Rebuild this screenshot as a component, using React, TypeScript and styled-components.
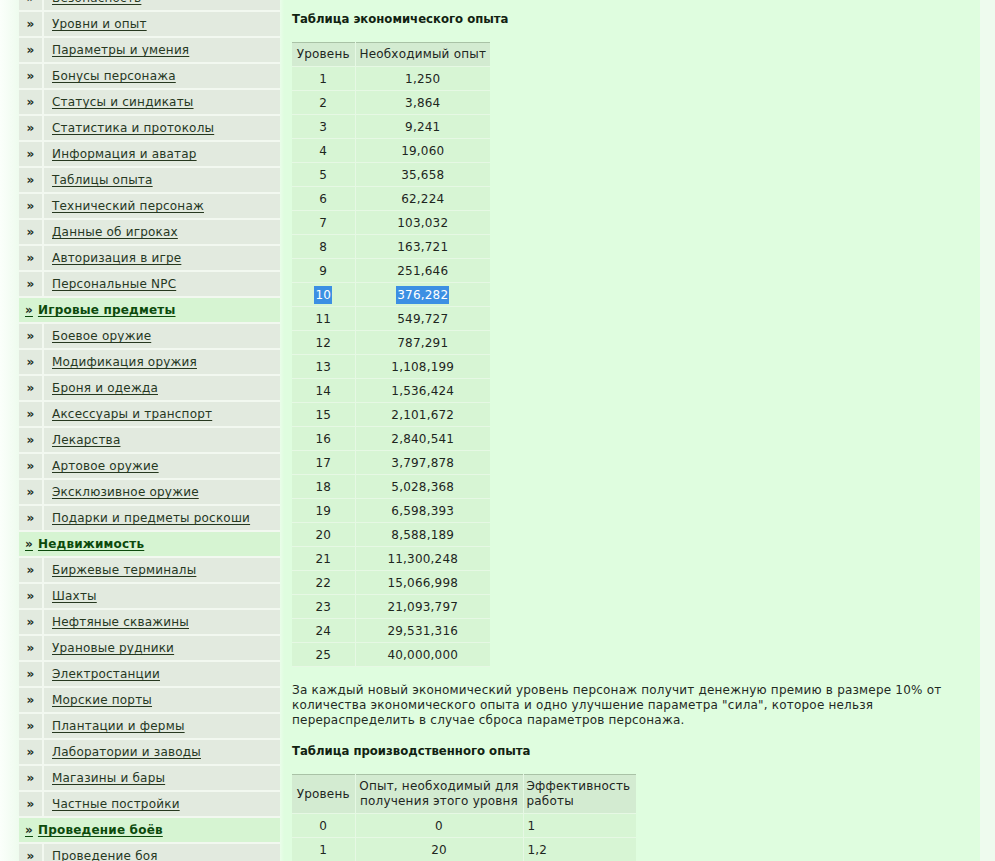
import React from "react";
import styled, { createGlobalStyle } from "styled-components";

const GlobalStyle = createGlobalStyle`
  html, body {
    margin: 0;
    padding: 0;
    background: #f4fdf4;
    overflow: hidden;
  }
  body {
    font-family: "DejaVu Sans", Verdana, sans-serif;
    font-size: 12px;
    letter-spacing: 0.2px;
    color: #1f2a1f;
  }
`;

const Page = styled.div`
  display: flex;
  align-items: stretch;
  margin-top: -14px;
  padding: 0 15px 0 19px;
  min-height: 900px;
  background: linear-gradient(to right, #fbfffb 0px, #eefbee 19px);
`;

const Sidebar = styled.div`
  width: 261px;
  flex: none;
  display: flex;
  flex-direction: column;
`;

const MenuRow = styled.div<{ $section?: boolean }>`
  display: flex;
  height: 26px;
  box-sizing: border-box;
  border-bottom: 2px solid #f2f8f0;
  background: ${(p) => (p.$section ? "#d6f4d2" : "#e2eadf")};
`;

const Bullet = styled.div`
  width: 23px;
  flex: none;
  display: flex;
  align-items: center;
  justify-content: center;
  font-weight: bold;
  font-size: 12px;
  color: #1e2e1e;
  border-right: 2px solid #f2f8f0;
`;

const MenuLink = styled.a`
  display: flex;
  align-items: center;
  padding-left: 8px;
  color: #26381f;
  text-decoration: underline;
  text-underline-offset: 2px;
`;

const SectionLink = styled.a`
  display: flex;
  align-items: center;
  padding-left: 6px;
  font-weight: bold;
  color: #0c4a0c;
  text-decoration: underline;
  text-underline-offset: 2px;
  gap: 5px;
`;

const SectionArrow = styled.span`
  font-weight: bold;
  font-size: 12px;
  color: #1e2e1e;
`;

const Content = styled.div`
  flex: 1;
  background: linear-gradient(to right, #eafdea 0px, #dffddf 4px, #dffddf 100%);
  padding: 26px 12px 0 12px;
`;

const Heading = styled.h3`
  margin: 0;
  font-size: 11.7px;
  letter-spacing: 0;
  font-weight: bold;
  color: #112211;
  line-height: 14px;
`;

const Table = styled.table<{ $width: number }>`
  width: ${(p) => p.$width}px;
  border-collapse: collapse;
  border-top: 1px solid #a9c2a6;
  border-bottom: 1px solid #a9c2a6;
  margin-top: 16px;
  font-size: 12px;
  color: #1e261e;
`;

const Th = styled.th<{ $align?: string; $width?: number }>`
  background: #d3ebd1;
  font-weight: normal;
  text-align: ${(p) => p.$align || "center"};
  width: ${(p) => (p.$width ? `${p.$width}px` : "auto")};
  padding: 4px 3px;
  height: 24px;
  box-sizing: border-box;
  line-height: 15px;
  white-space: nowrap;
  border-right: 1px solid #e6f8e4;
  border-bottom: 1px solid #e6f8e4;
  &:last-child {
    border-right: none;
  }
`;

const Td = styled.td<{ $align?: string }>`
  background: #d7f5d4;
  text-align: ${(p) => p.$align || "center"};
  padding: 0 4px;
  height: 23px;
  white-space: nowrap;
  border-right: 1px solid #e6f8e4;
  border-bottom: 1px solid #e6f8e4;
  &:last-child {
    border-right: none;
  }
`;

const Selected = styled.span`
  background: #3c8fe3;
  color: #ffffff;
  padding: 2px 1px;
`;

const Paragraph = styled.p`
  margin: 16px 0 16px 0;
  line-height: 15px;
  color: #1f2a1f;
`;

const menu: { label: string; section?: boolean }[] = [
  { label: "Безопасность" },
  { label: "Уровни и опыт" },
  { label: "Параметры и умения" },
  { label: "Бонусы персонажа" },
  { label: "Статусы и синдикаты" },
  { label: "Статистика и протоколы" },
  { label: "Информация и аватар" },
  { label: "Таблицы опыта" },
  { label: "Технический персонаж" },
  { label: "Данные об игроках" },
  { label: "Авторизация в игре" },
  { label: "Персональные NPC" },
  { label: "Игровые предметы", section: true },
  { label: "Боевое оружие" },
  { label: "Модификация оружия" },
  { label: "Броня и одежда" },
  { label: "Аксессуары и транспорт" },
  { label: "Лекарства" },
  { label: "Артовое оружие" },
  { label: "Эксклюзивное оружие" },
  { label: "Подарки и предметы роскоши" },
  { label: "Недвижимость", section: true },
  { label: "Биржевые терминалы" },
  { label: "Шахты" },
  { label: "Нефтяные скважины" },
  { label: "Урановые рудники" },
  { label: "Электростанции" },
  { label: "Морские порты" },
  { label: "Плантации и фермы" },
  { label: "Лаборатории и заводы" },
  { label: "Магазины и бары" },
  { label: "Частные постройки" },
  { label: "Проведение боёв", section: true },
  { label: "Проведение боя" },
];

const econ = [
  "1,250", "3,864", "9,241", "19,060", "35,658", "62,224", "103,032",
  "163,721", "251,646", "376,282", "549,727", "787,291", "1,108,199",
  "1,536,424", "2,101,672", "2,840,541", "3,797,878", "5,028,368",
  "6,598,393", "8,588,189", "11,300,248", "15,066,998", "21,093,797",
  "29,531,316", "40,000,000",
];

const prod = [
  ["0", "0", "1"],
  ["1", "20", "1,2"],
  ["2", "60", "1,4"],
];

const App = () => {
  return (
    <>
      <GlobalStyle />
      <Page>
        <Sidebar>
          {menu.map((m) =>
            m.section ? (
              <MenuRow key={m.label} $section>
                <SectionLink href="#">
                  <SectionArrow>»</SectionArrow>
                  {m.label}
                </SectionLink>
              </MenuRow>
            ) : (
              <MenuRow key={m.label}>
                <Bullet>»</Bullet>
                <MenuLink href="#">{m.label}</MenuLink>
              </MenuRow>
            )
          )}
        </Sidebar>
        <Content>
          <Heading>Таблица экономического опыта</Heading>
          <Table $width={198}>
            <thead>
              <tr>
                <Th $width={63}>Уровень</Th>
                <Th>Необходимый опыт</Th>
              </tr>
            </thead>
            <tbody>
              {econ.map((v, i) => (
                <tr key={v}>
                  <Td>{i === 9 ? <Selected>{i + 1}</Selected> : i + 1}</Td>
                  <Td>{i === 9 ? <Selected>{v}</Selected> : v}</Td>
                </tr>
              ))}
            </tbody>
          </Table>
          <Paragraph>
            За каждый новый экономический уровень персонаж получит денежную премию в размере 10% от
            количества экономического опыта и одно улучшение параметра "сила", которое нельзя
            перераспределить в случае сброса параметров персонажа.
          </Paragraph>
          <Heading>Таблица производственного опыта</Heading>
          <Table $width={344}>
            <thead>
              <tr>
                <Th $width={63}>Уровень</Th>
                <Th $width={168}>
                  Опыт, необходимый для
                  <br />
                  получения этого уровня
                </Th>
                <Th $align="left">
                  Эффективность
                  <br />
                  работы
                </Th>
              </tr>
            </thead>
            <tbody>
              {prod.map((r) => (
                <tr key={r[0]}>
                  <Td>{r[0]}</Td>
                  <Td>{r[1]}</Td>
                  <Td $align="left">{r[2]}</Td>
                </tr>
              ))}
            </tbody>
          </Table>
        </Content>
      </Page>
    </>
  );
};

export default App;
